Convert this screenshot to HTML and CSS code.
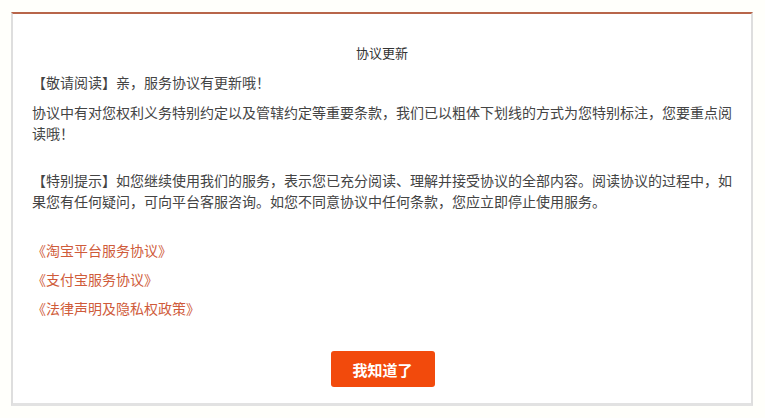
FILE: index.html
```html
<!DOCTYPE html>
<html>
<head>
    <title>协议更新</title>
    <link rel="stylesheet" href="styles.css">
</head>
<body>
    <div class="dialog">
        <h3 class="title">协议更新</h3>
        <p class="lead">【敬请阅读】亲，服务协议有更新哦！</p>
        <p>协议中有对您权利义务特别约定以及管辖约定等重要条款，我们已以粗体下划线的方式为您特别标注，您要重点阅读哦！</p>
        <p class="notice">【特别提示】如您继续使用我们的服务，表示您已充分阅读、理解并接受协议的全部内容。阅读协议的过程中，如果您有任何疑问，可向平台客服咨询。如您不同意协议中任何条款，您应立即停止使用服务。</p>
        <div class="links">
            <a href="#">《淘宝平台服务协议》</a>
            <a href="#">《支付宝服务协议》</a>
            <a href="#">《法律声明及隐私权政策》</a>
        </div>
        <div class="actions">
            <button>我知道了</button>
        </div>
    </div>
</body>
</html>
```

FILE: styles.css
```css
body {
    margin: 0;
    padding: 12px 11px 0 11px;
    background: #fffffb;
    font-family: "Noto Sans CJK SC", "Noto Sans", sans-serif;
    color: #444;
}
.dialog {
    width: 700px;
    height: 389px;
    padding: 0 19px;
    background: #fff;
    border: 2px solid #dedede;
    border-top: 2px solid #b8654a;
    border-bottom: 3px solid #e2e2e2;
}
.title {
    margin: 29px 0 0;
    font-size: 13px;
    font-weight: normal;
    line-height: 20px;
    text-align: center;
    color: #333;
}
p {
    margin: 0;
    font-size: 14px;
    line-height: 21px;
}
.lead { margin-top: 9px; }
p + p { margin-top: 9px; }
.notice { margin-top: 26px !important; }
.links {
    display: flex;
    flex-direction: column;
    gap: 8px;
    margin-top: 28px;
}
.links a {
    font-size: 14px;
    line-height: 21px;
    color: #cf5b3a;
    text-decoration: none;
}
.actions {
    display: flex;
    justify-content: center;
    margin-top: 32px;
}
button {
    width: 104px;
    height: 36px;
    margin-left: 1px;
    background: #f24a0c;
    color: #fff;
    border: none;
    border-radius: 3px;
    font-family: inherit;
    font-size: 15px;
    font-weight: bold;
    cursor: pointer;
}
```
